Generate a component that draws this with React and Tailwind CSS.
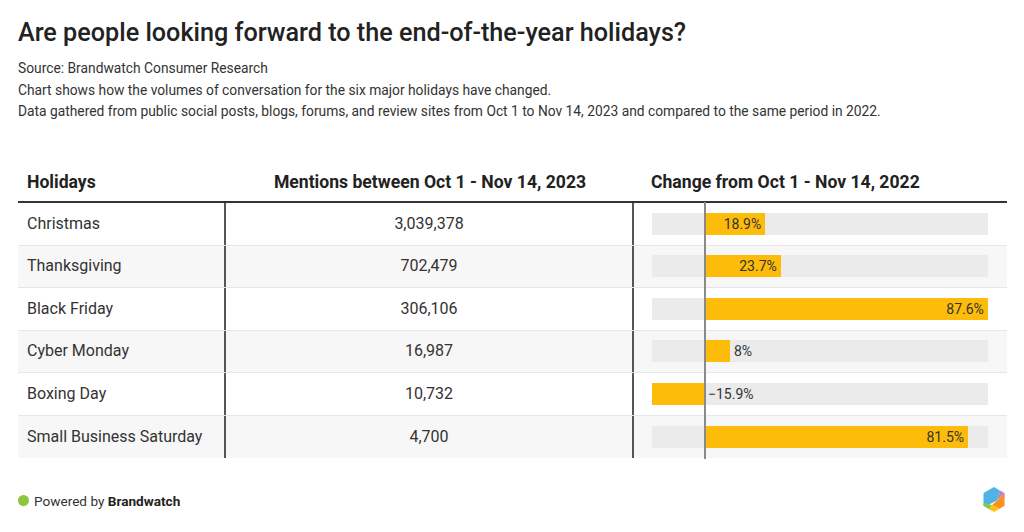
import React from "react";

const rows = [
  { name: "Christmas", mentions: "3,039,378", change: 18.9, label: "18.9%" },
  { name: "Thanksgiving", mentions: "702,479", change: 23.7, label: "23.7%" },
  { name: "Black Friday", mentions: "306,106", change: 87.6, label: "87.6%" },
  { name: "Cyber Monday", mentions: "16,987", change: 8, label: "8%" },
  { name: "Boxing Day", mentions: "10,732", change: -15.9, label: "\u221215.9%" },
  { name: "Small Business Saturday", mentions: "4,700", change: 81.5, label: "81.5%" },
];

const PX = 3.24; // px per percent
const ZERO = 52;

function Bar({ change, label }) {
  const w = Math.abs(change) * PX;
  const left = change >= 0 ? ZERO : ZERO - w;
  const inside = change > 15;
  return (
    <div className="relative w-[336px] h-[22px] bg-[#ebebeb]">
      <div className="absolute top-0 h-[22px] bg-[#fdbb0a]" style={{ left, width: w }} />
      {inside ? (
        <span
          className="absolute top-0 leading-[22px] text-[14px] text-[#333]"
          style={{ right: 336 - (ZERO + w) + 4 }}
        >
          {label}
        </span>
      ) : (
        <span
          className="absolute top-0 leading-[22px] text-[14px] text-[#333]"
          style={{ left: (change >= 0 ? ZERO + w : ZERO) + 4 }}
        >
          {label}
        </span>
      )}
    </div>
  );
}

function Logo() {
  return (
    <svg width="24" height="27" viewBox="0 0 24 27">
      <polygon points="12,1 17.5,4.2 15,14.5 3,20.5 1.5,19.8 1.5,7" fill="#4fb3e3" />
      <polygon points="17.5,4.2 22.5,7 20.5,9 15,14.5" fill="#a98dc7" />
      <polygon points="20.5,9 22.5,7 22.5,17" fill="#f2685a" />
      <polygon points="15,14.5 20.5,9 22.5,17 22.5,19.8 17.5,22.8 10,19" fill="#f7931e" />
      <polygon points="10,19 17.5,22.8 12,26 7,23.2" fill="#fdc30f" />
      <polygon points="1.5,17 10,19 7,23.2 1.5,19.8" fill="#8cc63f" />
    </svg>
  );
}

export default function App() {
  return (
    <div className="w-[1024px] h-[532px] bg-white text-[#333] font-['Roboto',sans-serif] px-[18px] pt-[18px] flex flex-col">
      <h1 className="text-[25.2px] leading-[30px] font-medium text-[#222]">
        Are people looking forward to the end-of-the-year holidays?
      </h1>
      <div className="mt-[10px] text-[13.8px] leading-[21px] text-[#333]">
        <p>Source: Brandwatch Consumer Research</p>
        <p className="mt-[1px]">Chart shows how the volumes of conversation for the six major holidays have changed.</p>
        <p>Data gathered from public social posts, blogs, forums, and review sites from Oct 1 to Nov 14, 2023 and compared to the same period in 2022.</p>
      </div>

      <div className="mt-[39px] w-[989px]">
        <div className="flex h-[42px] items-center pt-[2px] border-b-2 border-[#333] text-[17.6px] font-bold text-[#222]">
          <div className="w-[208px] pl-[9px]">Holidays</div>
          <div className="w-[408px] text-center">Mentions between Oct 1 - Nov 14, 2023</div>
          <div className="w-[373px] pl-[17px]">Change from Oct 1 - Nov 14, 2022</div>
        </div>
        {rows.map((r, i) => (
          <div
            key={r.name}
            className={
              "flex h-[42.5px] text-[16px] " +
              (i % 2 === 1 ? "bg-[#f7f7f7] " : "bg-white ") +
              (i < rows.length - 1 ? "border-b border-[#e6e6e6]" : "")
            }
          >
            <div className="w-[208px] pl-[9px] flex items-center border-r-2 border-[#555]">{r.name}</div>
            <div className="w-[408px] flex items-center justify-center border-r-2 border-[#555]">{r.mentions}</div>
            <div className="relative w-[373px] pl-[18px] flex items-center">
              <Bar change={r.change} label={r.label} />
              <div className="absolute left-[70px] top-[-1px] bottom-[-1px] w-[1.5px] bg-[#8a8a8a]" />
            </div>
          </div>
        ))}
      </div>

      <div className="mt-auto mb-[19px] flex items-center justify-between">
        <div className="flex items-center gap-[5px] text-[13.6px] text-[#333] pt-[3px]">
          <span className="w-[11px] h-[11px] rounded-full bg-[#8cc63f]" />
          <span>
            Powered by <span className="font-bold text-[#222]">Brandwatch</span>
          </span>
        </div>
        <Logo />
      </div>
    </div>
  );
}
